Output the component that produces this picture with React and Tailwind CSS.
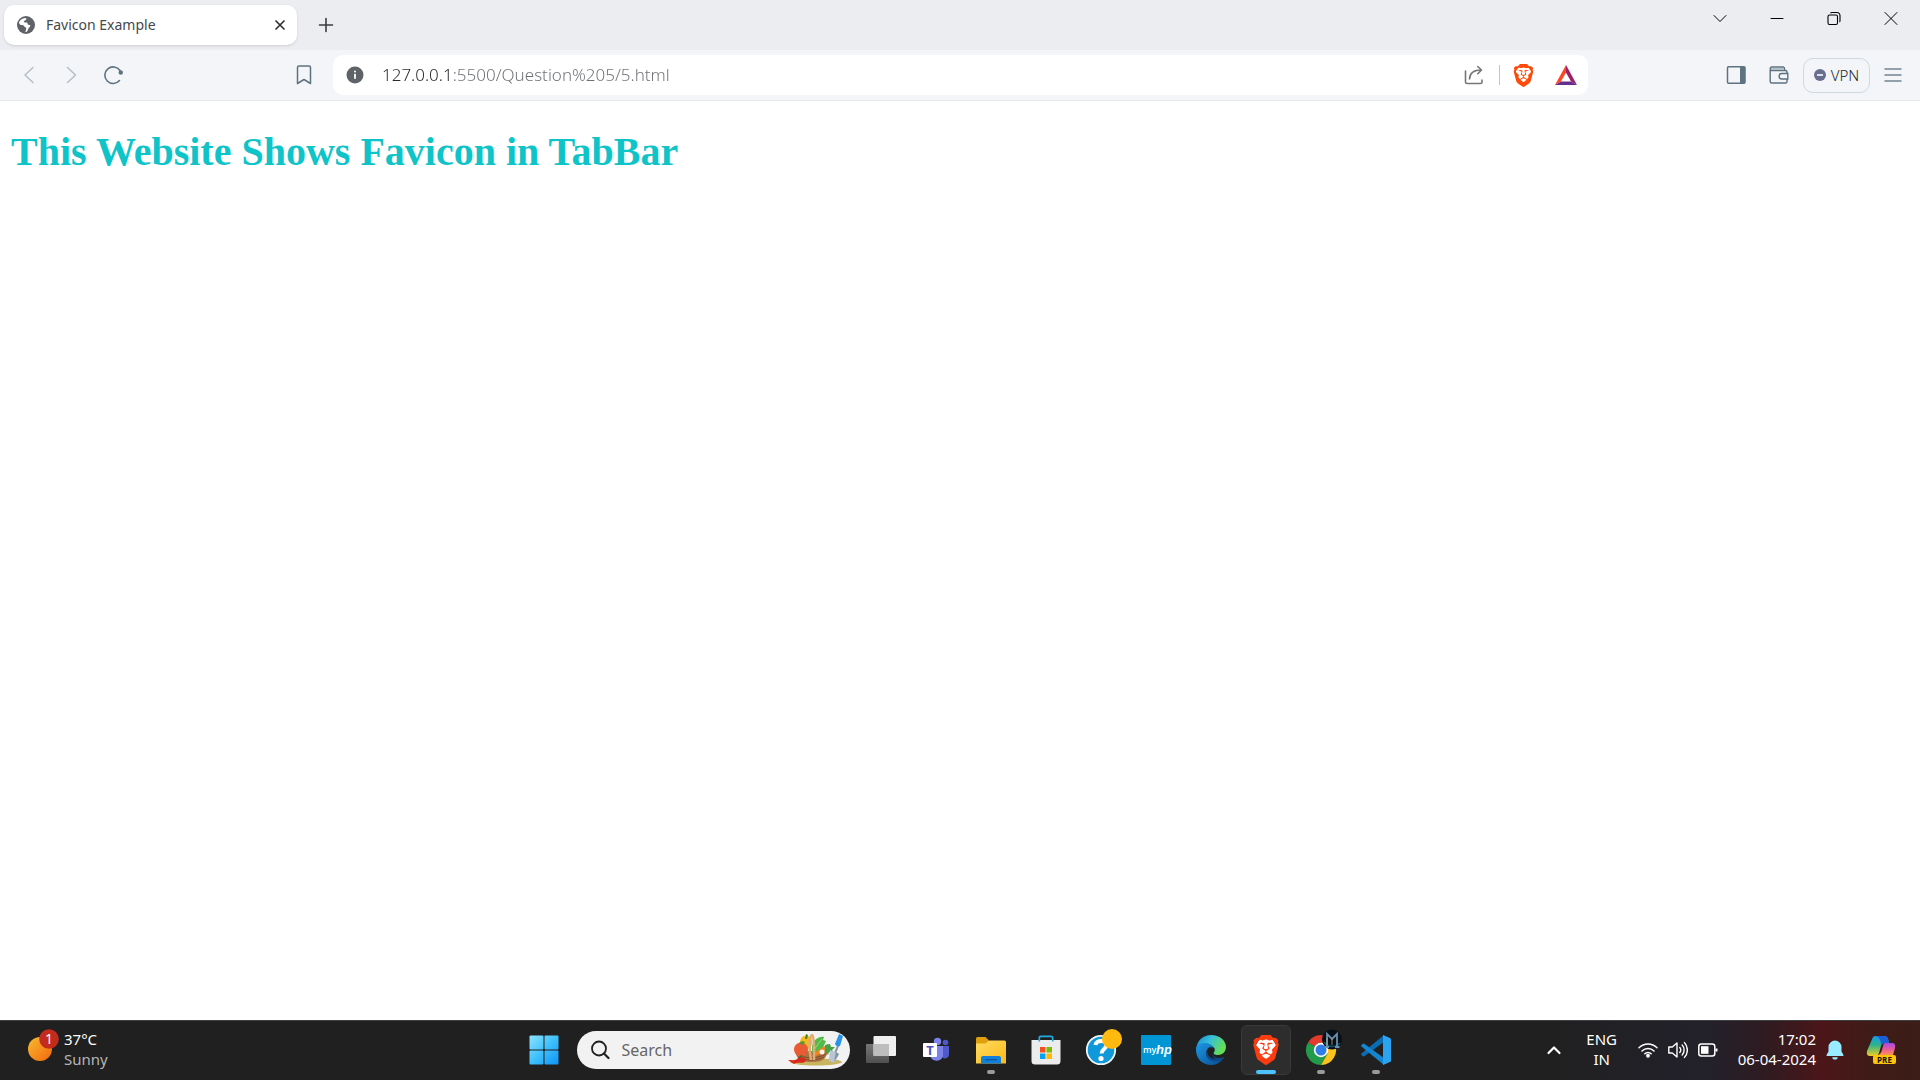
import React from "react";
import { SiBrave } from "react-icons/si";

function Globe() {
  return (
    <svg viewBox="0 0 18 18" className="size-[18px] shrink-0">
      <circle cx="9" cy="9" r="9" fill="#5f6368" />
      <path d="M2 6.2C3 3.8 5.4 2 8.3 1.9c.8.3 1.4.8 1 1.6-.6 1-2.2.8-2.4 1.9-.2.9.9 1 1.9 1 1.300 0 1.900.4 1.800 1.400-.1 1.100.9 1.100 1.900 1.100 1.200 0 1.100 1.500-.1 2.300-1.200.7-1 2.900-2.700 4.600-.8.500-1.700.300-1.700-.6 0-1.200.8-1.500.5-2.500-.3-.9-1.500-.7-2.300-1.300-.8-.7-.1-1.900-1.400-2.200C3.600 9 2.100 8.200 2 6.200z" fill="#fff" />
      <path d="M7.500 7.300c1.500-.3 2.700.1 2.900 1.300.1.900 1.600.5 2 1.300.4 1-1.300 1.300-1.900 2.200H8.200C6.500 11.600 7.100 9.900 5 9z" fill="#fff" />
      <path d="M5 9c2.200 0 2.200 2.300 4 2.700.8.4-.3 2.300-.6 4.300C5 15.800 2.500 13.300 2 10z" fill="#5f6368" />
    </svg>
  );
}

function Stroke({ box = 20, size = "size-5", width = 1.5, d }) {
  return (
    <svg viewBox={`0 0 ${box} ${box}`} className={size} fill="none" stroke="currentColor" strokeWidth={width} strokeLinecap="round" strokeLinejoin="round">
      <path d={d} />
    </svg>
  );
}

function BraveLion({ size, color }) {
  return (
    <span className={`relative flex shrink-0 items-center justify-center ${size}`}>
      <svg viewBox="0 0 24 24" className="absolute size-full">
        <path d="M7 3h10l3 5-3 9-5 4.500L7 17 4 8z" fill="#fff" />
      </svg>
      <SiBrave className={`relative size-full ${color}`} />
    </span>
  );
}

function TabStrip() {
  const control = "flex h-9 w-[57px] items-center justify-center text-black";
  return (
    <div className="flex h-[50px] items-start bg-[#ecedf1] pr-px">
      <div className="mt-[5px] ml-1 flex h-10 w-[293px] items-center rounded-[10px] bg-white pr-2 pl-[13px] shadow-sm">
        <Globe />
        <span className="ml-[11px] flex-1 pb-0.5 font-['Noto_Sans'] text-[14px] text-[#46484c]">Favicon Example</span>
        <button aria-label="Close tab" className="flex size-[18px] items-center justify-center text-[#303236]">
          <Stroke box={12} size="size-3" width={1.7} d="M2 2l8 8M10 2l-8 8" />
        </button>
      </div>
      <button aria-label="New tab" className="mt-[13px] ml-[17px] flex size-6 items-center justify-center text-[#3a3b3e]">
        <Stroke box={16} size="size-4" width={1.6} d="M8 1.500v13M1.500 8h13" />
      </button>
      <div className="flex-1" />
      <button aria-label="Search tabs" className={control}><Stroke box={16} size="size-4" width={1} d="M2 5.500l6 6 6-6" /></button>
      <button aria-label="Minimize" className={control}><Stroke box={16} size="size-4" width={1} d="M2 8.500h12" /></button>
      <button aria-label="Restore" className={control}>
        <svg viewBox="0 0 16 16" className="size-4" fill="none" stroke="currentColor" strokeWidth="1.1">
          <rect x="2" y="5" width="9.500" height="9.500" rx="1.500" />
          <path d="M4.500 3c.4-.4 1-.5 1.500-.5h5a3 3 0 0 1 3 3v5c0 .7-.1 1.200-.5 1.500" />
        </svg>
      </button>
      <button aria-label="Close" className={control}><Stroke box={16} size="size-4" width={1} d="M2 2.500l12 12M14 2.500l-12 12" /></button>
    </div>
  );
}

function Toolbar() {
  return (
    <div className="flex h-[51px] items-center border-b border-[#e6e8eb] bg-[#f3f5f8] text-[#5d7380]">
      <div className="flex w-[333px] items-center pl-2">
        <button aria-label="Back" className="flex w-[42px] justify-center text-[#b4bfc6]"><Stroke d="M14 2.500L6 10l8 7.500" /></button>
        <button aria-label="Forward" className="flex w-[42px] justify-center text-[#b4bfc6]"><Stroke d="M6.500 2.500l8 7.500-8 7.500" /></button>
        <button aria-label="Reload" className="flex w-[42px] justify-center">
          <svg viewBox="0 0 20 20" className="size-5" fill="none" stroke="currentColor" strokeWidth="1.600" strokeLinecap="round">
            <path d="M16.500 15.500A8.300 8.300 0 1 1 17 5.500" />
            <circle cx="17.800" cy="7.500" r="2.200" fill="currentColor" stroke="none" />
          </svg>
        </button>
        <button aria-label="Bookmark this page" className="mr-[19px] ml-auto"><Stroke d="M5 1h10a1.500 1.500 0 0 1 1.500 1.500v16L10 14.500l-6.500 4v-16A1.500 1.500 0 0 1 5 1z" /></button>
      </div>
      <div className="flex h-10 flex-1 items-center rounded-[10px] bg-white pr-[11px] pl-[13px]">
        <button aria-label="Site information">
          <svg viewBox="0 0 18 18" className="size-[18px]">
            <circle cx="9" cy="9" r="8.500" fill="#5f6368" />
            <circle cx="9" cy="5.600" r="1" fill="#fff" />
            <rect x="8.100" y="7.800" width="1.800" height="5" fill="#fff" />
          </svg>
        </button>
        <input
          aria-label="Address"
          defaultValue="127.0.0.1:5500/Question%205/5.html"
          className="ml-[18px] min-w-0 flex-1 bg-[linear-gradient(to_right,#26282b_68px,#6d7074_68px)] bg-clip-text font-['Noto_Sans'] text-[17px] font-light text-transparent outline-none"
        />
        <button aria-label="Share" className="text-[#757779]">
          <Stroke width={1.6} d="M1.500 6v11a1.500 1.500 0 0 0 1.500 1.500h13.500a1.500 1.500 0 0 0 1.500-1.500v-2M5.500 14c.2-5.500 3.500-9 12-9M13.800 1.500L17.500 5l-3.700 3.700" />
        </button>
        <span className="mr-3 ml-[15px] h-5 w-px bg-[#c4c5c8]" />
        <button aria-label="Brave Shields"><BraveLion size="size-[23px]" color="text-[#ff4a0a]" /></button>
        <button aria-label="Brave Rewards" className="ml-5">
          <svg viewBox="0 0 22 20" className="h-5 w-[22px]">
            <path d="M11 0L0 20l6-3.500 5-9z" fill="#ff4724" />
            <path d="M11 0l11 20-6-3.500-5-9z" fill="#9e1f63" />
            <path d="M0 20h22l-6-3.500H6z" fill="#662d91" />
          </svg>
        </button>
      </div>
      <div className="flex w-[332px] items-center justify-end pr-[17px]">
        <button aria-label="Sidebar">
          <svg viewBox="0 0 20 20" className="size-5"><rect x="1.500" y="1.800" width="17.500" height="16.500" rx="1" fill="none" stroke="currentColor" strokeWidth="1.500" /><path d="M14 2h5v16h-5z" fill="currentColor" /></svg>
        </button>
        <button aria-label="Wallet" className="ml-[23px]">
          <svg viewBox="0 0 20 20" className="size-5" fill="none" stroke="currentColor" strokeWidth="1.400">
            <path d="M1.200 5V16.500a1.500 1.500 0 0 0 1.500 1.500H16.500a1.500 1.500 0 0 0 1.500-1.500V7A1.500 1.500 0 0 0 16.500 5.500H2.500a1.300 1.300 0 0 1-1.300-1.300v-.7A1.500 1.500 0 0 1 2.700 2H14a1.500 1.500 0 0 1 1.500 1.500v2" />
            <path d="M2 3h13v2H2z" fill="#b4bfc6" stroke="none" />
            <path d="M18.800 8.500h-6a2.700 2.700 0 0 0 0 5.500h6z" fill="#f3f5f8" />
          </svg>
        </button>
        <button className="ml-[14px] flex h-[35px] w-[67px] items-center justify-center gap-[5px] rounded-[10px] border border-[#d0d9df] font-['Noto_Sans'] text-[15px] font-light text-[#26282b]">
          <svg viewBox="0 0 12 12" className="size-3"><circle cx="6" cy="6" r="6" fill="#6b6f8f" /><path d="M3 5h6v2H3z" fill="#dfe0ea" /></svg>
          VPN
        </button>
        <button aria-label="Menu" className="ml-[13px] text-[#71858f]"><Stroke width={1.4} d="M2 4h16M2 10h16M2 16h16" /></button>
      </div>
    </div>
  );
}

function Basket() {
  return (
    <svg viewBox="0 0 56 32" className="h-8 w-14 shrink-0">
      <ellipse cx="28" cy="28" rx="26" ry="3.500" fill="#c9b560" />
      <path d="M7 17c2 9 6 11 17 11s14-3 16-11z" fill="#ad7142" />
      <path d="M8 20c9 5 22 5 30 0M10 23c8 4 18 4 26 0" stroke="#7d4b28" strokeWidth="1" fill="none" />
      <ellipse cx="18" cy="8.500" rx="6" ry="7" fill="#f8b91c" />
      <path d="M17 5l1-5 2 1-1 4z" fill="#40852e" />
      <circle cx="13" cy="15.500" r="7" fill="#e85b35" />
      <path d="M11 9l3-2 3 1-2 3z" fill="#4a9a35" />
      <path d="M24 14c0-8 7-12 12-11l-1 3 3 1-4 9-10 3z" fill="#53b94b" />
      <path d="M25 17L34 5" stroke="#96dc75" strokeWidth="1" />
      <path d="M26 19l14-9 1 4-13 8z" fill="#f58220" />
      <path d="M23 26C21 15 21 3 24 1c3 3 2 16 2 25" fill="none" stroke="#dcae76" strokeWidth="2.500" />
      <path d="M37 11l5-1 1 3 4 0-3 3 2 3-5-1-1 3-3-4z" fill="#45a344" />
      <circle cx="34" cy="18" r="2.500" fill="#fff3e0" />
      <path d="M50 12l-3 7" stroke="#8797a8" strokeWidth="2" />
      <path d="M42 16l9 4-4 8c-3 1-6-1-6-3z" fill="#b9c5d3" />
      <path d="M48 18l3 2-5 8z" fill="#8294a8" />
      <path d="M51 0l4 2-3 10c-2 1-4 0-5-2z" fill="#2893e8" />
      <path d="M0 26c6 0 8 1 10-2 2-2 6-1 8 2-1 5-8 1-12 4-2-1-4-3-6-4z" fill="#d9291c" />
      <path d="M11 24l3-3" stroke="#34752a" strokeWidth="1.500" />
    </svg>
  );
}

function Apps({ children, label, mark }) {
  return (
    <button aria-label={label} className="flex w-[55px] justify-center">
      <span className={`relative flex size-[50px] items-center justify-center rounded-md border ${mark === "active" ? "border-[#3a3a3a] bg-[#2d2d2d]" : "border-transparent"}`}>
        {children}
        {mark && <span className={`absolute bottom-0 h-1 rounded-full ${mark === "active" ? "w-5 bg-[#4cc2ff]" : "w-2 bg-[#9a9a9a]"}`} />}
      </span>
    </button>
  );
}

const icon = "size-[30px] overflow-visible";

function CenterBar() {
  return (
    <div className="flex items-center pb-px">
      <Apps label="Start">
        <svg viewBox="0 0 30 30" className={icon}>
          <defs><linearGradient id="win" gradientUnits="userSpaceOnUse" x1="0" y1="0" x2="30" y2="30"><stop stopColor="#8fe5ff" /><stop offset=".5" stopColor="#3fc0fb" /><stop offset="1" stopColor="#0c91f5" /></linearGradient></defs>
          <g fill="url(#win)"><rect x=".5" y=".5" width="14" height="14" rx="1" /><rect x="15.500" y=".5" width="14" height="14" rx="1" /><rect x=".5" y="15.500" width="14" height="14" rx="1" /><rect x="15.500" y="15.500" width="14" height="14" rx="1" /></g>
        </svg>
      </Apps>
      <label className="mr-1 ml-[5px] flex h-[38px] w-[273px] items-center rounded-full bg-[#f2f2f2] pr-[6px] pl-[13px]">
        <svg viewBox="0 0 20 20" className="size-5 shrink-0" fill="none" stroke="#202020" strokeWidth="1.800" strokeLinecap="round"><circle cx="9" cy="8.500" r="7" /><path d="M14 13.500l4.500 4.500" strokeWidth="2.200" /></svg>
        <input aria-label="Search" placeholder="Search" className="ml-3 min-w-0 flex-1 bg-transparent font-['Noto_Sans'] text-[16px] outline-none placeholder:text-[#666]" />
        <Basket />
      </label>
      <Apps label="Task view">
        <svg viewBox="0 0 30 30" className={icon}>
          <defs><linearGradient id="tv" x1="0" y1="0" x2="0" y2="1"><stop stopColor="#777" /><stop offset="1" stopColor="#505050" /></linearGradient></defs>
          <rect x="0" y="9" width="23" height="19" rx="1" fill="url(#tv)" /><rect x="7.500" y="1" width="22.500" height="20" rx="1" fill="#efefef" /><path d="M7.500 9H23v12H8.500q-1 0-1-1z" fill="#bdbdbd" />
        </svg>
      </Apps>
      <Apps label="Teams">
        <svg viewBox="0 0 30 30" className={icon}>
          <circle cx="24.500" cy="7.500" r="2.800" fill="#5059c9" /><path d="M20 11h8v9a4 4 0 0 1-7 2z" fill="#5059c9" /><circle cx="16.500" cy="6.500" r="3.700" fill="#7b83eb" /><path d="M9 11h13v9a6.500 6 0 0 1-12 3z" fill="#7b83eb" /><rect x="2" y="8" width="14" height="14" rx="1" fill="#fff" />
          <text x="9" y="19.500" textAnchor="middle" fontFamily="Open Sans" fontWeight="700" fontSize="13" fill="#4b53bc">T</text>
        </svg>
      </Apps>
      <Apps label="File Explorer" mark="open">
        <svg viewBox="0 0 30 30" className={icon}>
          <defs><linearGradient id="fd" x1="0" y1="0" x2="1" y2="1"><stop stopColor="#ffdc62" /><stop offset="1" stopColor="#fbb917" /></linearGradient></defs>
          <path d="M0 3.500Q0 2 1.500 2H9.500l3.500 3.500V12H0z" fill="#e0a00d" /><path d="M0 8.500h9.500L13 5.500h15.500Q30 5.500 30 7v21.500H0z" fill="url(#fd)" /><path d="M5 28.500V23q0-2 2-2h16q2 0 2 2v5.500z" fill="#1280d8" /><path d="M9 24.700h12" stroke="#0b559d" strokeWidth="1.200" />
        </svg>
      </Apps>
      <Apps label="Microsoft Store">
        <svg viewBox="0 0 30 30" className={icon}>
          <path d="M.5 5h29v21q0 3.500-3.500 3.500H4Q.5 29.500.5 26z" fill="#ececec" /><path d="M8.300 6.500V3Q8.300 1.300 10 1.300H20Q21.700 1.300 21.700 3V6.500" fill="none" stroke="#22abe0" strokeWidth="1.700" />
          <path d="M9 12h5.500v5.500H9z" fill="#f25022" /><path d="M15.500 12H21v5.500h-5.500z" fill="#7fba00" /><path d="M9 18.500h5.500V24H9z" fill="#00a4ef" /><path d="M15.500 18.500H21V24h-5.500z" fill="#ffb900" />
        </svg>
      </Apps>
      <Apps label="Help">
        <svg viewBox="0 0 30 30" className={icon}>
          <circle cx="15" cy="15" r="14.200" fill="#0f98da" stroke="#eef6fa" strokeWidth="1.800" /><path d="M9.500 10c.5-5.500 11-5.500 11 0 0 4-5 4-5 8.500" fill="none" stroke="#fff" strokeWidth="4" /><circle cx="15" cy="23.500" r="2.600" fill="#fff" /><circle cx="26" cy="4" r="10" fill="#ffb90f" />
        </svg>
      </Apps>
      <Apps label="myHP">
        <svg viewBox="0 0 30 30" className={icon}>
          <rect width="30" height="30" rx="1" fill="#0096d6" />
          <text x="2" y="18" fontFamily="Open Sans" fontWeight="600" fontSize="9" fill="#fff">my</text>
          <text x="15" y="18.500" fontFamily="Liberation Sans Narrow, Liberation Sans" fontStyle="italic" fontWeight="700" fontSize="13" fill="#fff">hp</text>
        </svg>
      </Apps>
      <Apps label="Edge">
        <svg viewBox="0 0 30 30" className={icon}>
          <defs><linearGradient id="ea" x1="0" y1="0" x2="1" y2=".4"><stop stopColor="#1688d8" /><stop offset=".5" stopColor="#37c0d7" /><stop offset="1" stopColor="#63df57" /></linearGradient><linearGradient id="eb" x1="0" y1="0" x2="1" y2="1"><stop stopColor="#1c98e5" /><stop offset="1" stopColor="#0b4c94" /></linearGradient></defs>
          <path d="M.3 13C1.500 5 7.500 0 15 0c8.500 0 15 5.500 15 12 0 5-4 8-8 8-3.500 0-5-1.500-4.200-2.500 3-4-1-7.500-6.300-7.500C6 10 1.500 12 0 16z" fill="url(#ea)" />
          <path d="M0 15c0-5 4-7 8.500-7 4.500 0 8 2 9.500 5-2-1-5-1-6.500 1-4 5 1 12 8 12 3 0 5-.6 7-1.500C24 28 20 30 15 30 6.500 30 0 23.500 0 15z" fill="url(#eb)" />
          <path d="M12 13.500c-5 6 0 14 10 13 3-.6 5.500-2 6.500-4.500-3 1.300-7.500 1.500-10-.5-2.500-1.700-3.500-4.500-1.500-7-1.500-2-3.500-2-5-1z" fill="#0d4a8c" />
          <path d="M12.500 13c-2 2-1.500 5 0 7.500 1.500 2 4 3.500 7 3.500-3-2-4-5-2-8.500-.8-2.500-3.500-3.500-5-2.500z" fill="#202020" />
        </svg>
      </Apps>
      <Apps label="Brave" mark="active"><BraveLion size="size-[30px]" color="text-[#fb3c10]" /></Apps>
      <Apps label="Chrome" mark="open">
        <svg viewBox="0 0 30 30" className={icon}>
          <path d="M15 15L2 7.500A15 15 0 0 1 28 7.500H15z" fill="#e33b2e" /><path d="M15 15L2 7.500A15 15 0 0 0 15 30l6.500-11.300z" fill="#229b4b" /><path d="M15 7.500h13A15 15 0 0 1 15 30l6.500-11.300z" fill="#fcc31e" /><circle cx="15" cy="15" r="7.200" fill="#fff" /><circle cx="15" cy="15" r="5.500" fill="#2f7de9" />
          <circle cx="26" cy="4.500" r="10" fill="#071019" /><path d="M18 7a10 10 0 0 0 16 1" stroke="#0c5468" strokeWidth="1.500" fill="none" /><path d="M21 12V-1l5 5 5-5v13M18.500 12H23M29 12h4.500" fill="none" stroke="#6d8ea8" strokeWidth="1.800" /><path d="M26 4v6M21 3v7" fill="none" stroke="#d5b780" strokeWidth=".7" />
        </svg>
      </Apps>
      <Apps label="Visual Studio Code" mark="open">
        <svg viewBox="0 0 30 30" className={icon}>
          <path d="M0 19.500l2.500 2.300L23 7V0L1 18q-1 .7-1 1.500z" fill="#0a6cb3" /><path d="M0 10.500l2.500-2.300L23 23v7L1 12q-1-.7-1-1.500z" fill="#1485d1" /><path d="M22 0l7 3q1 .5 1 1.500v21q0 1-1 1.500l-7 3z" fill="#2ba5f2" />
        </svg>
      </Apps>
    </div>
  );
}

function Tray() {
  return (
    <div className="flex flex-1 items-center justify-end pr-6 pb-px text-[15px] leading-5 text-white">
      <button aria-label="Show hidden icons"><Stroke width={2.2} box={20} size="size-5" d="M4.500 13l5.500-5.500 5.500 5.500" /></button>
      <button className="ml-[14px] w-[48px] pb-[3px] text-center">ENG<br />IN</button>
      <button aria-label="Network, volume and battery" className="ml-3 flex items-center gap-[10px]">
        <svg viewBox="0 0 20 20" className="size-5" fill="none" stroke="currentColor" strokeWidth="1.500" strokeLinecap="round"><path d="M1 7.800a12.700 12.700 0 0 1 18 0M4 11a8.500 8.500 0 0 1 12 0M6.800 13.800a4.500 4.500 0 0 1 6.400 0" /><circle cx="10" cy="15.800" r="1.200" fill="currentColor" /></svg>
        <svg viewBox="0 0 20 20" className="size-5" fill="none" stroke="currentColor" strokeWidth="1.400" strokeLinecap="round" strokeLinejoin="round"><path d="M.8 7h3.500L9 3v14l-4.700-4H.8zM11.800 7.500a4 4 0 0 1 0 5M14.200 5a7.500 7.500 0 0 1 0 10M16.500 2.600a11 11 0 0 1 0 14.800" /></svg>
        <svg viewBox="0 0 20 20" className="size-5" fill="none" stroke="currentColor" strokeWidth="1.500"><rect x=".8" y="4" width="16" height="12" rx="2.500" /><rect x="3" y="6.200" width="7.500" height="7.600" fill="currentColor" stroke="none" /><path d="M18.500 8.500v3" strokeWidth="2" /></svg>
      </button>
      <button className="ml-5 pb-[3px] text-right whitespace-nowrap">17:02<br />06-04-2024</button>
      <button aria-label="Notifications" className="ml-[10px]">
        <svg viewBox="0 0 18 20" className="h-5 w-[18px]" fill="#99ebff"><path d="M9 .5a6.500 6.500 0 0 1 6.500 6.500v4.500l2 3.500q.3 1-.7 1H1.200q-1 0-.7-1l2-3.500V7A6.500 6.500 0 0 1 9 .5zM6.300 17.200h5.400a2.700 2.300 0 0 1-5.400 0z" /></svg>
      </button>
      <button aria-label="Copilot preview" className="ml-[22px]">
        <svg viewBox="0 0 30 30" className="size-[30px] overflow-visible">
          <defs><linearGradient id="ca" x1="0" y1="0" x2="0" y2="1"><stop stopColor="#1799e8" /><stop offset=".45" stopColor="#2bb48c" /><stop offset="1" stopColor="#f0cc22" /></linearGradient><linearGradient id="cb" x1="0" y1="0" x2="0" y2="1"><stop stopColor="#a14be8" /><stop offset=".5" stopColor="#e659a0" /><stop offset="1" stopColor="#ff914d" /></linearGradient></defs>
          <path d="M7 2Q8 1 10 1h9q3 0 4 7h-4q-3 0-4 3l-2 7q-1 3-3 3H4q-4 0-3-5z" fill="url(#ca)" /><path d="M10 1h9q3 0 4 7h-4q-3 0-4 2 0-7-5-9z" fill="#1b5ed8" />
          <path d="M19 8h7q4 0 3 5l-2 7H12q3-1 4-5l1-4q.500-3 2-3z" fill="url(#cb)" />
          <rect x="7" y="20" width="23" height="9" rx="2" fill="#fdc40a" /><text x="18.500" y="27.500" textAnchor="middle" fontFamily="Open Sans" fontWeight="700" fontSize="8" fill="#16130a">PRE</text>
        </svg>
      </button>
    </div>
  );
}

export default function App() {
  return (
    <div className="flex min-h-screen flex-col bg-white">
      <header><TabStrip /><Toolbar /></header>
      <main className="flex-1 px-[11px] pt-7">
        <h1 className="font-['Liberation_Serif',serif] text-[40px] leading-[46px] font-bold text-[#0fc4c8]">This Website Shows Favicon in TabBar</h1>
      </main>
      <footer className="flex h-[60px] items-center border-t border-[#3c4041] bg-[#202020] bg-[linear-gradient(to_right,transparent_80%,#23212a_89%,#2f1b21_92%,#4c1619_95%,#401b17_97%,#3c1d17)] font-['Noto_Sans',sans-serif]">
        <div className="flex flex-1 items-center pr-0 pl-6">
          <button className="flex items-center pb-1 pl-[3px] text-left text-[15px] leading-5 text-white">
            <svg viewBox="0 0 32 40" className="h-10 w-8">
              <defs><linearGradient id="sun" x1="0" y1="0" x2="1" y2="1"><stop stopColor="#f5bd31" /><stop offset="1" stopColor="#f4660b" /></linearGradient></defs>
              <circle cx="13" cy="20" r="12" fill="url(#sun)" /><circle cx="22" cy="10" r="9.800" fill="#c42b1f" />
              <text x="22" y="15" textAnchor="middle" fontSize="14" fill="#fff">1</text>
            </svg>
            <span className="ml-[5px]">37°C<br /><span className="text-[#b5b5b5]">Sunny</span></span>
          </button>
        </div>
        <CenterBar />
        <Tray />
      </footer>
    </div>
  );
}
